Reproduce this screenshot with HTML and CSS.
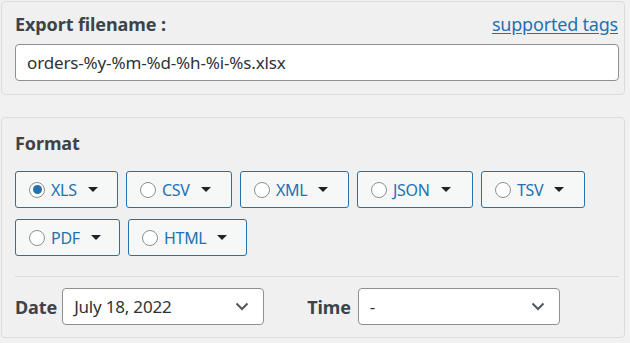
FILE: index.html
```html
<!DOCTYPE html>
<html>
<head>
<meta charset="utf-8">
<link rel="stylesheet" href="styles.css">
</head>
<body>
<div class="panel panel-file">
  <div class="file-head">
    <span class="label-big">Export filename :</span>
    <a class="tags-link" href="#">supported tags</a>
  </div>
  <div class="text-input">orders-%y-%m-%d-%h-%i-%s.xlsx</div>
</div>
<div class="panel panel-format">
  <div class="label-big format-title">Format</div>
  <div class="btn-rows">
    <div class="btn-row">
      <div class="fmt-btn w-xls"><span class="radio checked"></span><span class="fmt-name">XLS</span><span class="caret"></span></div>
      <div class="fmt-btn w-csv"><span class="radio"></span><span class="fmt-name">CSV</span><span class="caret"></span></div>
      <div class="fmt-btn w-xml"><span class="radio"></span><span class="fmt-name">XML</span><span class="caret"></span></div>
      <div class="fmt-btn w-json"><span class="radio"></span><span class="fmt-name">JSON</span><span class="caret"></span></div>
      <div class="fmt-btn w-tsv"><span class="radio"></span><span class="fmt-name">TSV</span><span class="caret"></span></div>
    </div>
    <div class="btn-row">
      <div class="fmt-btn w-pdf"><span class="radio"></span><span class="fmt-name">PDF</span><span class="caret"></span></div>
      <div class="fmt-btn w-html"><span class="radio"></span><span class="fmt-name">HTML</span><span class="caret"></span></div>
    </div>
  </div>
  <div class="sep"></div>
  <div class="dt-row">
    <span class="label-big">Date</span>
    <div class="select sel-date"><span>July 18, 2022</span><svg class="chev" width="14" height="9" viewBox="0 0 14 9"><path d="M1.5 1.5 L7 7 L12.5 1.5" fill="none" stroke="#50575e" stroke-width="2"/></svg></div>
    <span class="label-big time-label">Time</span>
    <div class="select sel-time"><span>-</span><svg class="chev" width="14" height="9" viewBox="0 0 14 9"><path d="M1.5 1.5 L7 7 L12.5 1.5" fill="none" stroke="#50575e" stroke-width="2"/></svg></div>
  </div>
</div>
</body>
</html>
```
FILE: styles.css
```css
html, body {
  margin: 0;
  padding: 0;
  background: #f1f1f1;
  font-family: "Noto Sans", "Open Sans", sans-serif;
  color: #3c434a;
}
body {
  padding: 1px 0 0 1px;
  width: 630px;
  height: 343px;
  box-sizing: border-box;
  overflow: hidden;
}
.panel {
  width: 624px;
  box-sizing: border-box;
  border: 1px solid #dcdcde;
  border-radius: 4px;
  background: #f0f0f0;
}
.panel-file {
  height: 94px;
  padding: 10px 6px 0 13px;
}
.file-head {
  display: flex;
  justify-content: space-between;
  align-items: baseline;
  height: 32px;
}
.label-big {
  font-weight: 700;
  font-size: 18px;
  color: #3c434a;
  letter-spacing: -0.1px;
}
.tags-link {
  font-size: 18px;
  color: #2271b1;
  text-decoration: underline;
  text-underline-offset: 2px;
  letter-spacing: -0.2px;
}
.text-input {
  box-sizing: border-box;
  height: 37px;
  width: 604px;
  border: 1px solid #8c8f94;
  border-radius: 4px;
  background: #fff;
  font-size: 17px;
  color: #2c3338;
  padding-left: 11px;
  display: flex;
  align-items: center;
  letter-spacing: -0.15px;
}
.panel-format {
  margin-top: 22px;
  height: 221px;
  padding: 12px 6px 0 13px;
}
.format-title {
  height: 41px;
  line-height: 26px;
}
.btn-rows {
  display: flex;
  flex-direction: column;
  gap: 11px;
}
.btn-row {
  display: flex;
  gap: 8px;
}
.fmt-btn {
  box-sizing: border-box;
  height: 37px;
  border: 1px solid #2271b1;
  border-radius: 3px;
  background: #f6f7f7;
  display: flex;
  align-items: center;
  padding-left: 13px;
  font-size: 16px;
  color: #2271b1;
}
.w-xls { width: 103px; }
.w-csv { width: 106px; }
.w-xml { width: 109px; }
.w-json { width: 116px; }
.w-tsv { width: 104px; }
.w-pdf { width: 105px; }
.w-html { width: 119px; }
.radio {
  box-sizing: border-box;
  width: 16px;
  height: 16px;
  border: 1px solid #8c8f94;
  border-radius: 50%;
  background: #fff;
  display: flex;
  align-items: center;
  justify-content: center;
  flex: none;
}
.radio.checked::after {
  content: "";
  width: 9px;
  height: 9px;
  border-radius: 50%;
  background: #2271b1;
}
.fmt-name {
  margin-left: 6px;
  letter-spacing: -0.3px;
}
.caret {
  width: 0;
  height: 0;
  border-left: 5px solid transparent;
  border-right: 5px solid transparent;
  border-top: 5px solid #1d2327;
  margin-left: 11px;
}
.sep {
  margin-top: 20px;
  width: 604px;
  height: 1px;
  background: #dcdcde;
}
.dt-row {
  display: flex;
  align-items: center;
  margin-top: 11px;
}
.select {
  box-sizing: border-box;
  height: 37px;
  border: 1px solid #8c8f94;
  border-radius: 4px;
  background: #fff;
  display: flex;
  align-items: center;
  justify-content: space-between;
  padding: 0 14px 0 11px;
  font-size: 17px;
  color: #2c3338;
  letter-spacing: -0.2px;
}
.sel-date {
  width: 202px;
  margin-left: 5px;
}
.time-label {
  margin-left: 43px;
}
.sel-time {
  width: 202px;
  margin-left: 7px;
}
.chev { display: block; }
```
